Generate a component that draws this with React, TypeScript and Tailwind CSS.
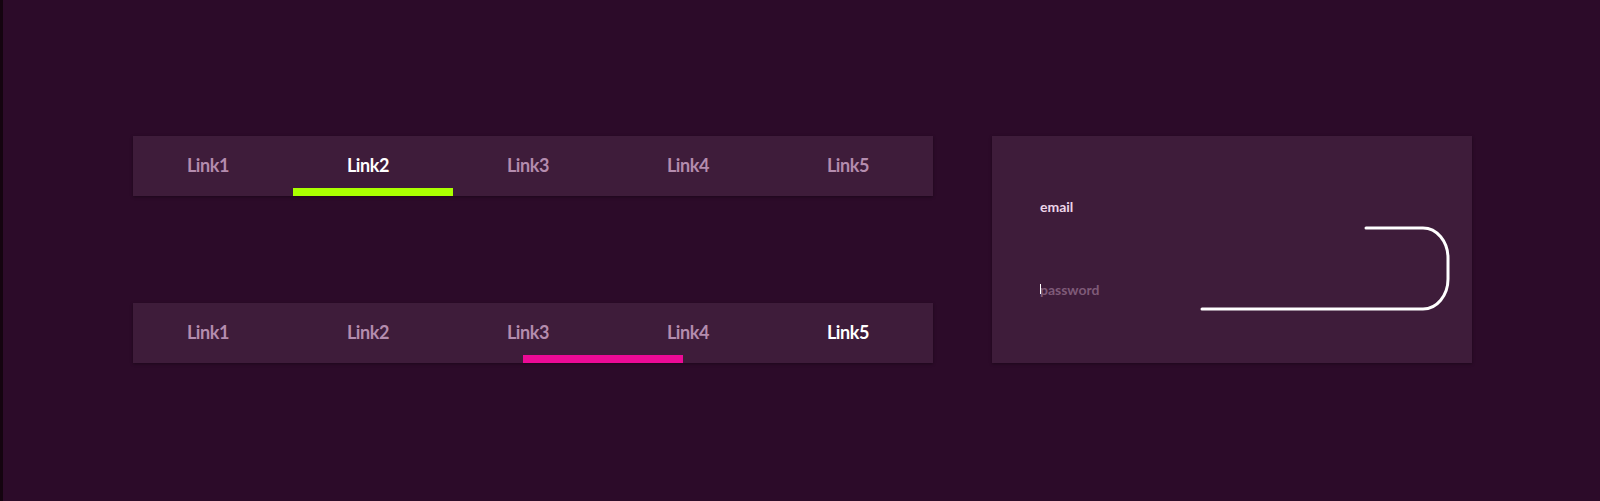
import React from 'react'

const LINKS = ['Link1', 'Link2', 'Link3', 'Link4', 'Link5']

// underline offset from the bar's left edge, in px
function TabBar({ active, barLeft, barColor }: { active: number; barLeft: number; barColor: string }) {
  return (
    <nav className="relative flex h-[60px] w-[800px] bg-[#3e1c3a] shadow-[0_1px_3px_rgba(0,0,0,0.35)]">
      {LINKS.map((label, i) => (
        <a
          key={label}
          href="#"
          className={`flex flex-1 items-center justify-center pr-[10px] pb-[2px] text-[18px] font-bold tracking-[-0.4px] ${
            i === active ? 'text-white' : 'text-[#b48cae]'
          }`}
        >
          {label}
        </a>
      ))}
      <span
        className={`absolute bottom-0 h-[8px] w-[160px] ${barColor}`}
        style={{ left: barLeft }}
      />
    </nav>
  )
}

function LoginCard() {
  return (
    <form className="relative h-[227px] w-[480px] bg-[#3e1c3a] px-[48px] pt-[61px] shadow-[0_1px_3px_rgba(0,0,0,0.35)]">
      <label className="block text-[14px] leading-[20px] font-bold text-[#ecd4e8]">email</label>
      <div className="relative mt-[60px] w-[200px]">
        <input
          type="password"
          placeholder="password"
          className="w-full bg-transparent text-[14px] leading-[20px] font-bold text-white caret-transparent outline-none placeholder:text-[#7e5a78]"
        />
        <span className="absolute left-0 top-[7px] h-[10px] w-px bg-white" />
      </div>
      <svg
        className="pointer-events-none absolute inset-0"
        width="480"
        height="227"
        viewBox="0 0 480 227"
        fill="none"
      >
        <path
          d="M374 92 H431 A25 30 0 0 1 456 122 V143 A25 30 0 0 1 431 173 H210"
          stroke="#ffffff"
          strokeWidth="3"
          strokeLinecap="round"
          strokeLinejoin="round"
        />
      </svg>
    </form>
  )
}

export default function App() {
  return (
    <div
      className="flex h-[501px] w-full items-start border-l-[3px] border-[#14040f] bg-[#2c0b29] pl-[130px] pt-[136px]"
      style={{ fontFamily: 'Lato, "Noto Sans", sans-serif' }}
    >
      <div className="flex h-[227px] flex-col justify-between">
        <TabBar active={1} barLeft={160} barColor="bg-[#aaff00]" />
        <TabBar active={4} barLeft={390} barColor="bg-[#ec0a96]" />
      </div>
      <div className="ml-[59px]">
        <LoginCard />
      </div>
    </div>
  )
}
